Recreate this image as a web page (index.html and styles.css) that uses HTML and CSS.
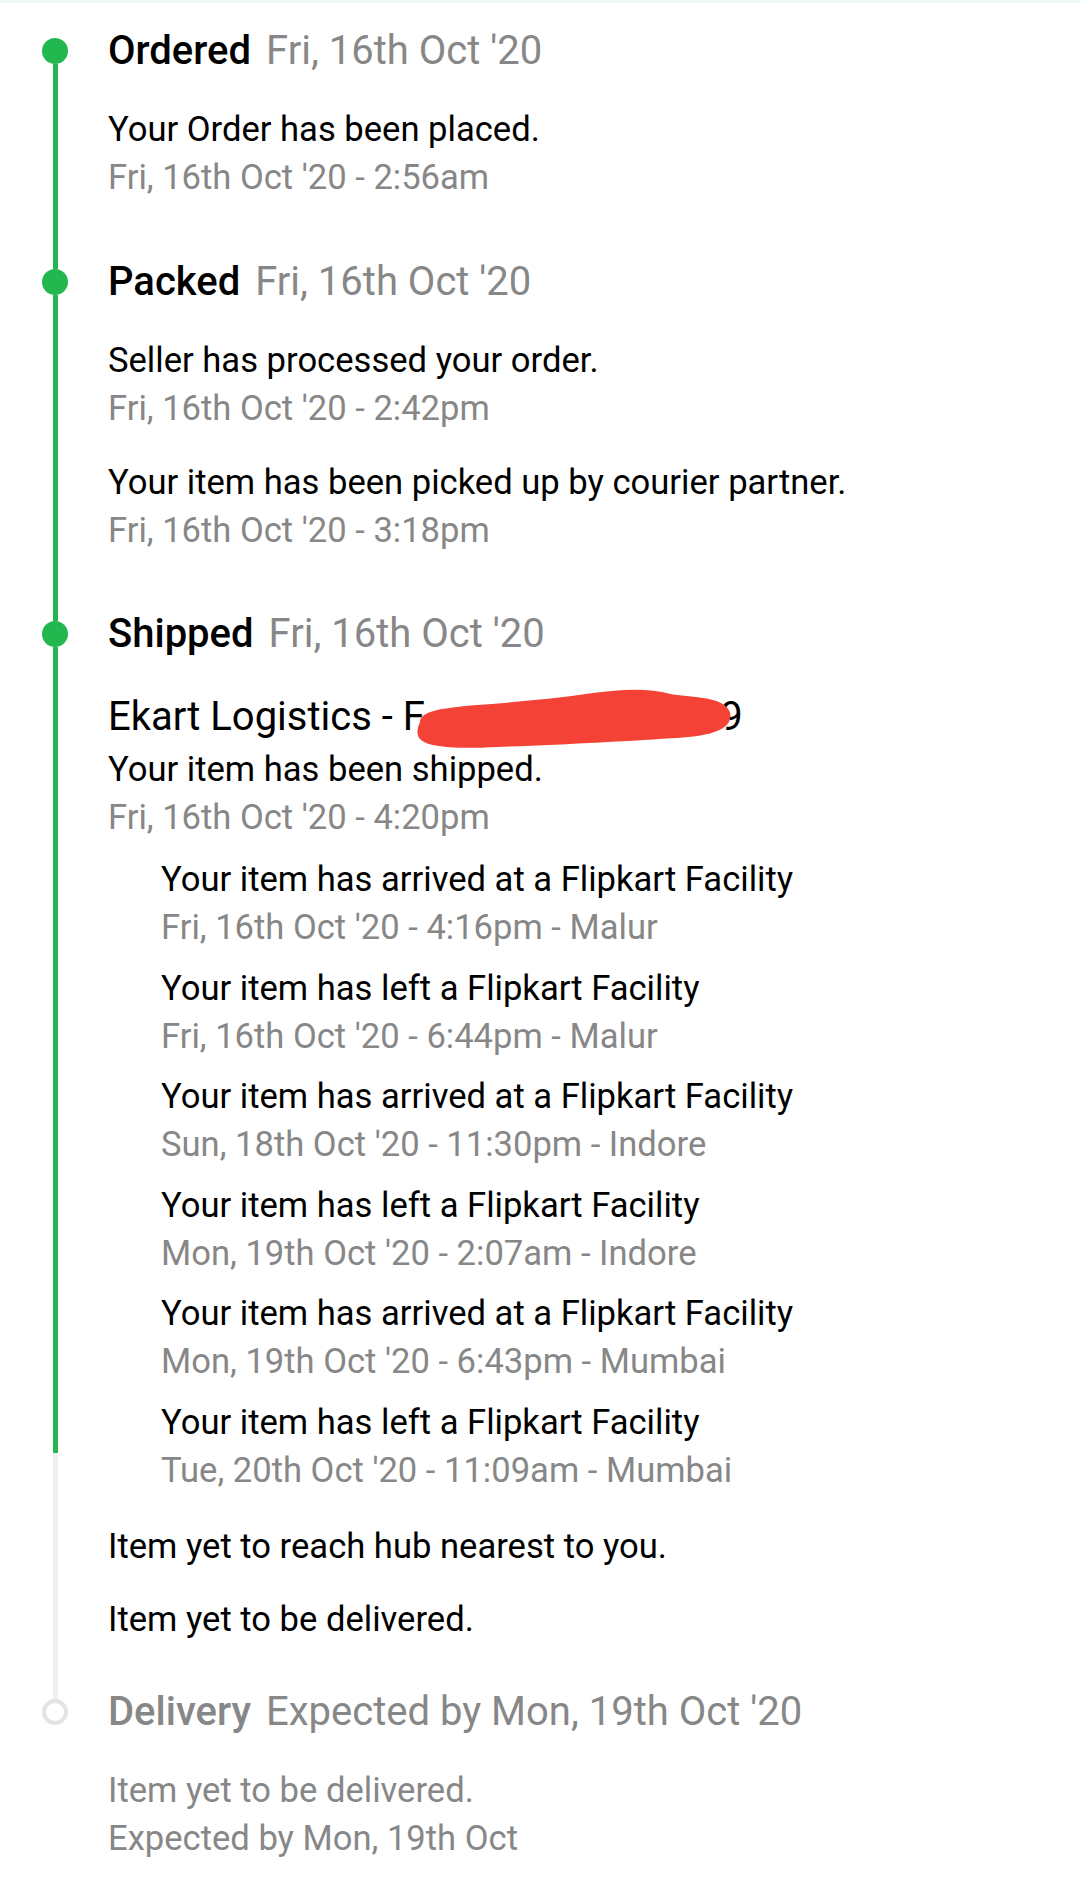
FILE: index.html
```html
<!DOCTYPE html>
<html lang="en">
<head>
<meta charset="utf-8">
<title>Order tracking</title>
<link rel="stylesheet" href="styles.css">
</head>
<body>
<main class="tracker">

  <section class="stage stage-first">
    <div class="rail">
      <div class="seg seg-top"></div>
      <div class="dot"></div>
      <div class="seg seg-bottom"></div>
    </div>
    <div class="content">
      <h2 class="title"><span class="name">Ordered</span><span class="when">Fri, 16th Oct '20</span></h2>
      <div class="events">
        <div class="event">
          <p class="msg">Your Order has been placed.</p>
          <p class="time">Fri, 16th Oct '20 - 2:56am</p>
        </div>
      </div>
    </div>
  </section>

  <section class="stage stage-second">
    <div class="rail">
      <div class="seg seg-top"></div>
      <div class="dot"></div>
      <div class="seg seg-bottom"></div>
    </div>
    <div class="content">
      <h2 class="title"><span class="name">Packed</span><span class="when">Fri, 16th Oct '20</span></h2>
      <div class="events">
        <div class="event">
          <p class="msg">Seller has processed your order.</p>
          <p class="time">Fri, 16th Oct '20 - 2:42pm</p>
        </div>
        <div class="event">
          <p class="msg">Your item has been picked up by courier partner.</p>
          <p class="time">Fri, 16th Oct '20 - 3:18pm</p>
        </div>
      </div>
    </div>
  </section>

  <section class="stage stage-third">
    <div class="rail">
      <div class="seg seg-top"></div>
      <div class="dot"></div>
      <div class="seg seg-bottom seg-split"></div>
    </div>
    <div class="content">
      <h2 class="title"><span class="name">Shipped</span><span class="when">Fri, 16th Oct '20</span></h2>
      <p class="courier">Ekart Logistics - F<span class="redact"><span class="hidden-id">MPC0000000000</span><svg class="scribble" viewBox="0 0 320 60" preserveAspectRatio="none" aria-hidden="true"><path d="M6 34 C 6 22, 30 20, 60 17 C 100 14, 140 11, 180 5 C 210 1, 236 0, 258 6 C 282 10, 312 8, 318 24 C 322 40, 300 47, 268 49 C 220 52, 150 56, 84 58 C 44 60, 12 59, 5 49 C 2 43, 4 38, 6 34 Z" fill="#f44336"/></svg></span>9</p>
      <div class="event event-tight">
        <p class="msg">Your item has been shipped.</p>
        <p class="time">Fri, 16th Oct '20 - 4:20pm</p>
      </div>
      <div class="sub-events">
        <div class="event">
          <p class="msg">Your item has arrived at a Flipkart Facility</p>
          <p class="time">Fri, 16th Oct '20 - 4:16pm - Malur</p>
        </div>
        <div class="event">
          <p class="msg">Your item has left a Flipkart Facility</p>
          <p class="time">Fri, 16th Oct '20 - 6:44pm - Malur</p>
        </div>
        <div class="event">
          <p class="msg">Your item has arrived at a Flipkart Facility</p>
          <p class="time">Sun, 18th Oct '20 - 11:30pm - Indore</p>
        </div>
        <div class="event">
          <p class="msg">Your item has left a Flipkart Facility</p>
          <p class="time">Mon, 19th Oct '20 - 2:07am - Indore</p>
        </div>
        <div class="event">
          <p class="msg">Your item has arrived at a Flipkart Facility</p>
          <p class="time">Mon, 19th Oct '20 - 6:43pm - Mumbai</p>
        </div>
        <div class="event">
          <p class="msg">Your item has left a Flipkart Facility</p>
          <p class="time">Tue, 20th Oct '20 - 11:09am - Mumbai</p>
        </div>
      </div>
      <p class="msg pending pending-hub">Item yet to reach hub nearest to you.</p>
      <p class="msg pending pending-del">Item yet to be delivered.</p>
    </div>
  </section>

  <section class="stage stage-last">
    <div class="rail">
      <div class="seg seg-top"></div>
      <div class="dot dot-open"></div>
    </div>
    <div class="content">
      <h2 class="title title-muted"><span class="name">Delivery</span><span class="when">Expected by Mon, 19th Oct '20</span></h2>
      <div class="events">
        <div class="event event-muted">
          <p class="time">Item yet to be delivered.</p>
          <p class="time">Expected by Mon, 19th Oct</p>
        </div>
      </div>
    </div>
  </section>

</main>
</body>
</html>
```

FILE: styles.css
```css
* { box-sizing: border-box; }

html, body {
  margin: 0;
  padding: 0;
  background: #ffffff;
}

body {
  font-family: Roboto, "Noto Sans", "Liberation Sans", sans-serif;
  color: #000000;
  width: 1080px;
  min-height: 1884px;
}

.tracker {
  border-top: 3px solid #eefafa;
  padding-bottom: 16px;
}

p, h2 { margin: 0; }

/* ---------- stage row ---------- */
.stage {
  display: flex;
  align-items: stretch;
}

.rail {
  flex: none;
  width: 108px;
  display: flex;
  flex-direction: column;
}

.seg {
  width: 5px;
  margin-left: 52.5px;
  background: #22b84f;
}

.seg-bottom { flex: 1; }

.dot {
  flex: none;
  width: 26px;
  height: 26px;
  margin-left: 42px;
  border-radius: 50%;
  background: #22b84f;
}

.content {
  flex: 1;
  min-width: 0;
}

/* spacing above each header (content) and matching rail top segment */
.stage-first .content { padding-top: 24px; }
.stage-first .seg-top { height: 35px; background: transparent; }

.stage-second .content { padding-top: 57px; }
.stage-second .seg-top { height: 68px; }

.stage-third .content { padding-top: 56px; }
.stage-third .seg-top { height: 67px; }

.stage-last .content { padding-top: 45px; }
.stage-last .seg-top { height: 56px; background: #efefef; }

.seg-split {
  background: linear-gradient(to bottom, #22b84f 0, #22b84f 806px, #efefef 806px, #efefef 100%);
}

.dot-open {
  background: #ffffff;
  border: 4.5px solid #e3e3e3;
}

/* ---------- text ---------- */
.title {
  font-size: 40px;
  line-height: 48px;
  font-weight: 400;
  white-space: nowrap;
}

.title .name {
  font-weight: 500;
  color: #000000;
  margin-right: 15px;
}

.title .when { color: #878787; }

.title-muted .name { color: #878787; }

.events { margin-top: 30px; }

.event + .event { margin-top: 26px; }

.msg, .time {
  font-size: 34.6px;
  line-height: 48px;
  white-space: nowrap;
}

.msg { color: #000000; }
.time { color: #878787; }

.courier {
  margin-top: 33px;
  font-size: 40px;
  line-height: 52px;
  white-space: nowrap;
}

.redact {
  position: relative;
  display: inline-block;
  vertical-align: top;
  line-height: 52px;
}

.hidden-id {
  visibility: hidden;
  letter-spacing: -1.2px;
}

.scribble {
  position: absolute;
  left: -11px;
  top: -3px;
  width: 318px;
  height: 61px;
}

.event-tight { margin-top: 2px; }

.sub-events {
  margin-top: 14px;
  padding-left: 53px;
}

.sub-events .event + .event { margin-top: 12.5px; }

.pending-hub { margin-top: 28px; }
.pending-del { margin-top: 25.5px; }
```
